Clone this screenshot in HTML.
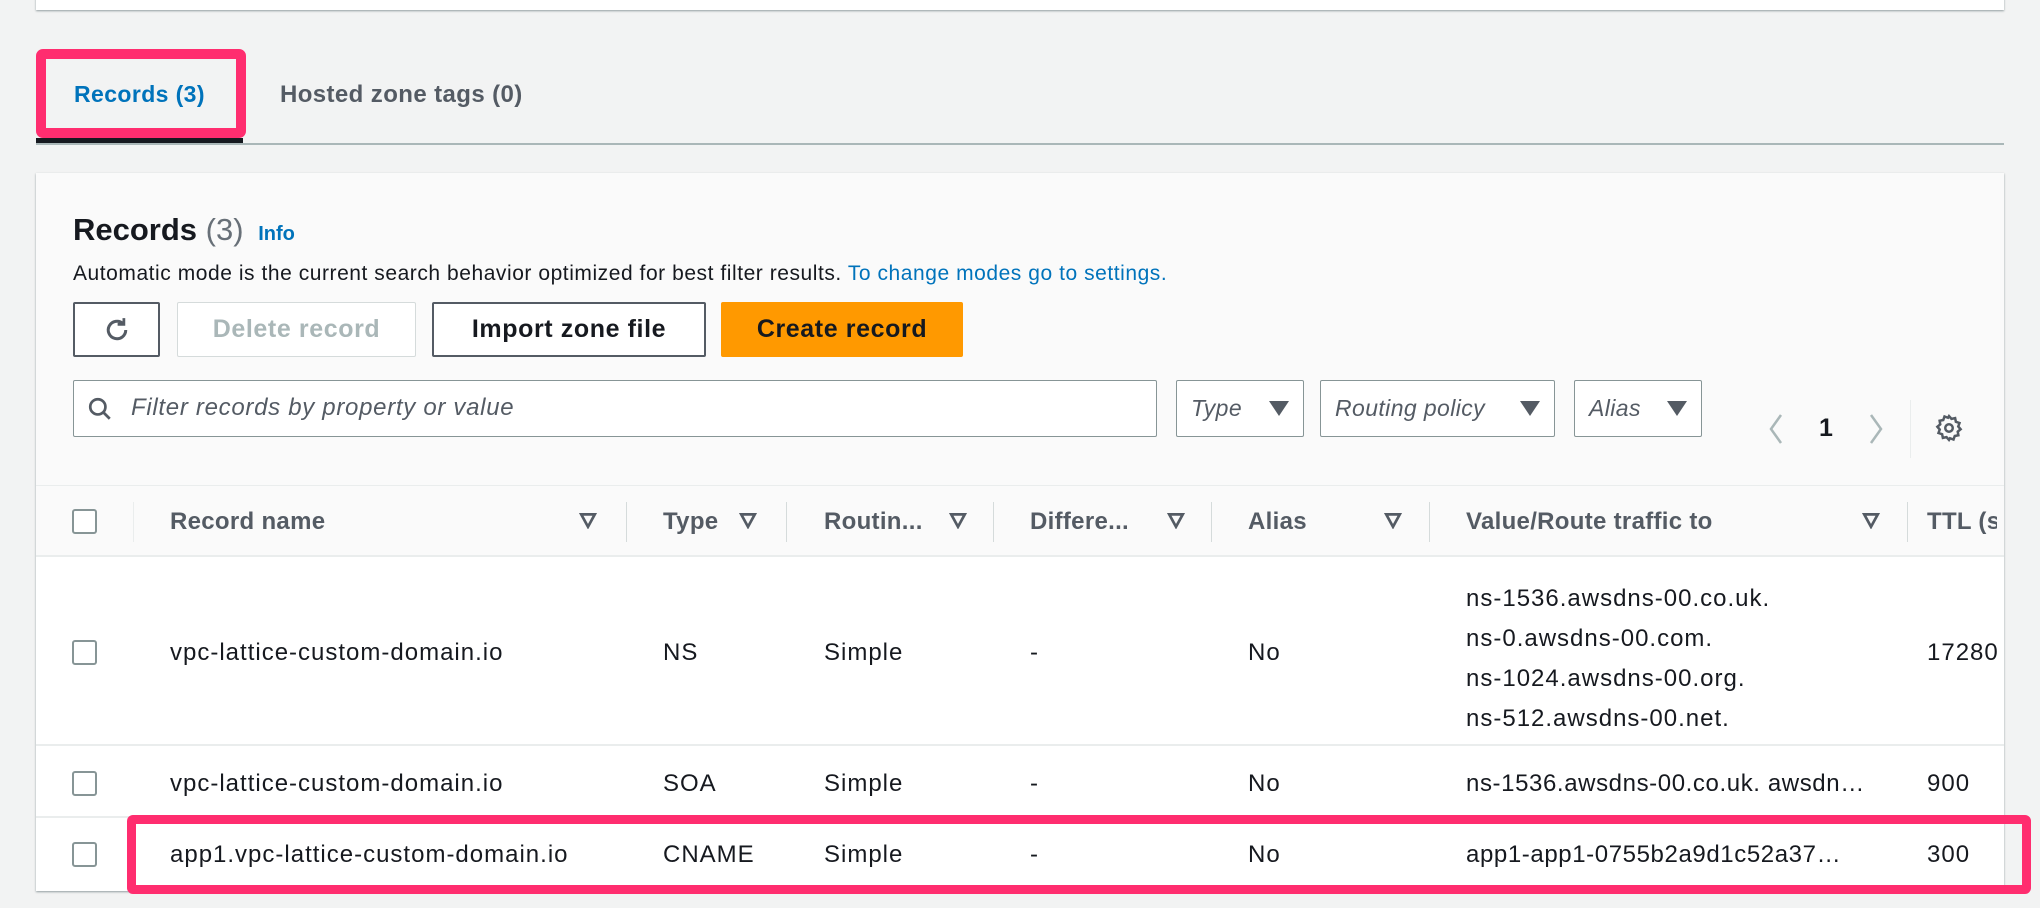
<!DOCTYPE html>
<html><head><meta charset="utf-8"><style>
*{box-sizing:border-box;margin:0;padding:0}
body{width:2040px;height:908px;background:#f2f3f3;font-family:"Liberation Sans",sans-serif;color:#16191f;position:relative;overflow:hidden}
.a{position:absolute;white-space:nowrap}
.card{position:absolute;background:#fff;box-shadow:0 1px 2px rgba(0,28,36,.4)}
.btn{position:absolute;top:302px;height:55px;border:2px solid #545b64;border-radius:2px;background:#fff;font-weight:bold;font-size:25px;letter-spacing:.6px;display:flex;align-items:center;justify-content:center;color:#16191f}
.sel{position:absolute;top:380px;height:57px;border:1px solid #879596;border-radius:2px;background:#fff;font-style:italic;font-size:23px;letter-spacing:.4px;color:#545b64;display:flex;align-items:center;padding:0 14px;justify-content:space-between}
.tri{width:0;height:0;border-left:10px solid transparent;border-right:10px solid transparent;border-top:15px solid #545b64}
.h{position:absolute;top:508px;font-weight:bold;font-size:24px;letter-spacing:.3px;color:#545b64;white-space:nowrap}
.si{position:absolute;top:511px;width:18px;height:18px}
.dv{position:absolute;top:502px;width:1px;height:40px;background:#d5dbdb}
.cb{position:absolute;left:72px;width:25px;height:25px;border:2px solid #879596;border-radius:3px;background:#fff}
.t{position:absolute;font-size:24px;letter-spacing:1px;color:#16191f;white-space:nowrap}
</style></head><body>
<div class="card" style="left:36px;top:-10px;width:1968px;height:20px"></div>

<div class="a" style="left:36px;top:49px;width:210px;height:89px;border:10px solid #ff2d6f;border-radius:7px"></div>
<div class="a" style="left:36px;top:138px;width:207px;height:5px;background:#16191f"></div>
<div class="a" style="left:36px;top:143px;width:1968px;height:2px;background:#aab7b8"></div>
<div class="a" style="left:74px;top:81px;font-size:23px;font-weight:bold;letter-spacing:.4px;color:#0073bb">Records (3)</div>
<div class="a" style="left:280px;top:81px;font-size:24px;font-weight:bold;letter-spacing:.4px;color:#545b64">Hosted zone tags (0)</div>

<div class="card" style="left:36px;top:173px;width:1968px;height:718px;background:#fafafa;overflow:hidden">
 <div class="a" style="left:0;top:383px;width:100%;height:335px;background:#fff"></div>
 <div class="a" style="left:0;top:312px;width:100%;height:1px;background:#eaeded"></div>
 <div class="a" style="left:0;top:382px;width:100%;height:2px;background:#eaeded"></div>
 <div class="a" style="left:0;top:571px;width:100%;height:2px;background:#eaeded"></div>
 <div class="a" style="left:0;top:643px;width:100%;height:2px;background:#eaeded"></div>
</div>

<div class="a" style="left:73px;top:212px;font-size:31px;font-weight:bold">Records <span style="font-weight:normal;color:#687078">(3)</span> <span style="font-size:20px;color:#0073bb;margin-left:6px">Info</span></div>
<div class="a" style="left:73px;top:262px;font-size:21px;letter-spacing:.55px;color:#16191f">Automatic mode is the current search behavior optimized for best filter results. <span style="color:#0073bb">To change modes go to settings.</span></div>

<div class="btn" style="left:73px;width:87px"><svg width="30" height="30" viewBox="0 0 24 24" fill="none" stroke="#545b64" stroke-width="2.4"><path d="M19 12a7 7 0 1 1-2.3-5.2"/><path d="M17.5 2.5v5h-5" stroke-width="2.2"/></svg></div>
<div class="btn" style="left:177px;width:239px;border-color:#d5dbdb;color:#aab7b8;border-width:1px">Delete record</div>
<div class="btn" style="left:432px;width:274px">Import zone file</div>
<div class="btn" style="left:721px;width:242px;background:#ff9900;border-color:#ff9900">Create record</div>

<div class="a" style="left:73px;top:380px;width:1084px;height:57px;border:1px solid #879596;border-radius:2px;background:#fff"></div>
<svg class="a" style="left:87px;top:396px" width="26" height="26" viewBox="0 0 24 24" fill="none" stroke="#545b64" stroke-width="2.5"><circle cx="10" cy="10" r="7"/><path d="M15 15l6 6"/></svg>
<div class="a" style="left:131px;top:394px;font-size:24px;letter-spacing:.7px;font-style:italic;color:#545b64">Filter records by property or value</div>
<div class="sel" style="left:1176px;width:128px"><span>Type</span><div class="tri"></div></div>
<div class="sel" style="left:1320px;width:235px"><span>Routing policy</span><div class="tri"></div></div>
<div class="sel" style="left:1574px;width:128px"><span>Alias</span><div class="tri"></div></div>
<svg class="a" style="left:1766px;top:412px" width="20" height="34" viewBox="0 0 20 34" fill="none" stroke="#aab7b8" stroke-width="2.5"><path d="M15 3L5 17l10 14"/></svg>
<div class="a" style="left:1819px;top:414px;font-size:25px;font-weight:bold">1</div>
<svg class="a" style="left:1866px;top:412px" width="20" height="34" viewBox="0 0 20 34" fill="none" stroke="#aab7b8" stroke-width="2.5"><path d="M5 3l10 14L5 31"/></svg>
<div class="a" style="left:1910px;top:400px;width:1px;height:58px;background:#eaeded"></div>
<svg class="a" style="left:1934px;top:413px" width="30" height="30" viewBox="0 0 24 24" fill="none" stroke="#545b64" stroke-width="2"><circle cx="12" cy="12" r="3"/><path d="M12 2.5l2 2.2 2.9-.6.6 2.9 2.9 1-1 2.8 1.9 2.2-2.3 1.9.5 2.9-2.9.6-1 2.8-2.8-1L12 21.5l-2-2.2-2.9.6-.6-2.9-2.9-1 1-2.8L2.7 11l2.3-1.9-.5-2.9 2.9-.6 1-2.8 2.8 1z"/></svg>

<div class="cb" style="top:509px"></div>
<div class="dv" style="left:133px;background:#eaeded"></div>
<div class="h" style="left:170px">Record name</div>
<div class="h" style="left:663px">Type</div>
<div class="h" style="left:824px">Routin...</div>
<div class="h" style="left:1030px">Differe...</div>
<div class="h" style="left:1248px">Alias</div>
<div class="h" style="left:1466px">Value/Route traffic to</div>
<div class="h" style="left:1927px;width:70px;overflow:hidden">TTL (s)</div>
<svg class="si" style="left:579px" viewBox="0 0 16 16"><path d="M2 3h12L8 14z" fill="none" stroke="#545b64" stroke-width="2.4"/></svg>
<svg class="si" style="left:739px" viewBox="0 0 16 16"><path d="M2 3h12L8 14z" fill="none" stroke="#545b64" stroke-width="2.4"/></svg>
<svg class="si" style="left:949px" viewBox="0 0 16 16"><path d="M2 3h12L8 14z" fill="none" stroke="#545b64" stroke-width="2.4"/></svg>
<svg class="si" style="left:1167px" viewBox="0 0 16 16"><path d="M2 3h12L8 14z" fill="none" stroke="#545b64" stroke-width="2.4"/></svg>
<svg class="si" style="left:1384px" viewBox="0 0 16 16"><path d="M2 3h12L8 14z" fill="none" stroke="#545b64" stroke-width="2.4"/></svg>
<svg class="si" style="left:1862px" viewBox="0 0 16 16"><path d="M2 3h12L8 14z" fill="none" stroke="#545b64" stroke-width="2.4"/></svg>
<div class="dv" style="left:626px"></div>
<div class="dv" style="left:786px"></div>
<div class="dv" style="left:993px"></div>
<div class="dv" style="left:1211px"></div>
<div class="dv" style="left:1429px"></div>
<div class="dv" style="left:1907px"></div>

<div class="cb" style="top:640px"></div>
<div class="t" style="left:170px;top:639px">vpc-lattice-custom-domain.io</div>
<div class="t" style="left:663px;top:639px">NS</div>
<div class="t" style="left:824px;top:639px">Simple</div>
<div class="t" style="left:1030px;top:639px">-</div>
<div class="t" style="left:1248px;top:639px">No</div>
<div class="t" style="left:1466px;top:579px;line-height:40px">ns-1536.awsdns-00.co.uk.<br>ns-0.awsdns-00.com.<br>ns-1024.awsdns-00.org.<br>ns-512.awsdns-00.net.</div>
<div class="t" style="left:1927px;top:639px;width:70px;overflow:hidden">172800</div>

<div class="cb" style="top:771px"></div>
<div class="t" style="left:170px;top:770px">vpc-lattice-custom-domain.io</div>
<div class="t" style="left:663px;top:770px">SOA</div>
<div class="t" style="left:824px;top:770px">Simple</div>
<div class="t" style="left:1030px;top:770px">-</div>
<div class="t" style="left:1248px;top:770px">No</div>
<div class="t" style="left:1466px;top:770px;letter-spacing:.6px">ns-1536.awsdns-00.co.uk. awsdn…</div>
<div class="t" style="left:1927px;top:770px">900</div>

<div class="cb" style="top:842px"></div>
<div class="t" style="left:170px;top:841px">app1.vpc-lattice-custom-domain.io</div>
<div class="t" style="left:663px;top:841px">CNAME</div>
<div class="t" style="left:824px;top:841px">Simple</div>
<div class="t" style="left:1030px;top:841px">-</div>
<div class="t" style="left:1248px;top:841px">No</div>
<div class="t" style="left:1466px;top:841px;letter-spacing:.6px">app1-app1-0755b2a9d1c52a37…</div>
<div class="t" style="left:1927px;top:841px">300</div>

<div class="a" style="left:127px;top:815px;width:1904px;height:79px;border:9px solid #ff2d6f;border-radius:6px"></div>
</body></html>
